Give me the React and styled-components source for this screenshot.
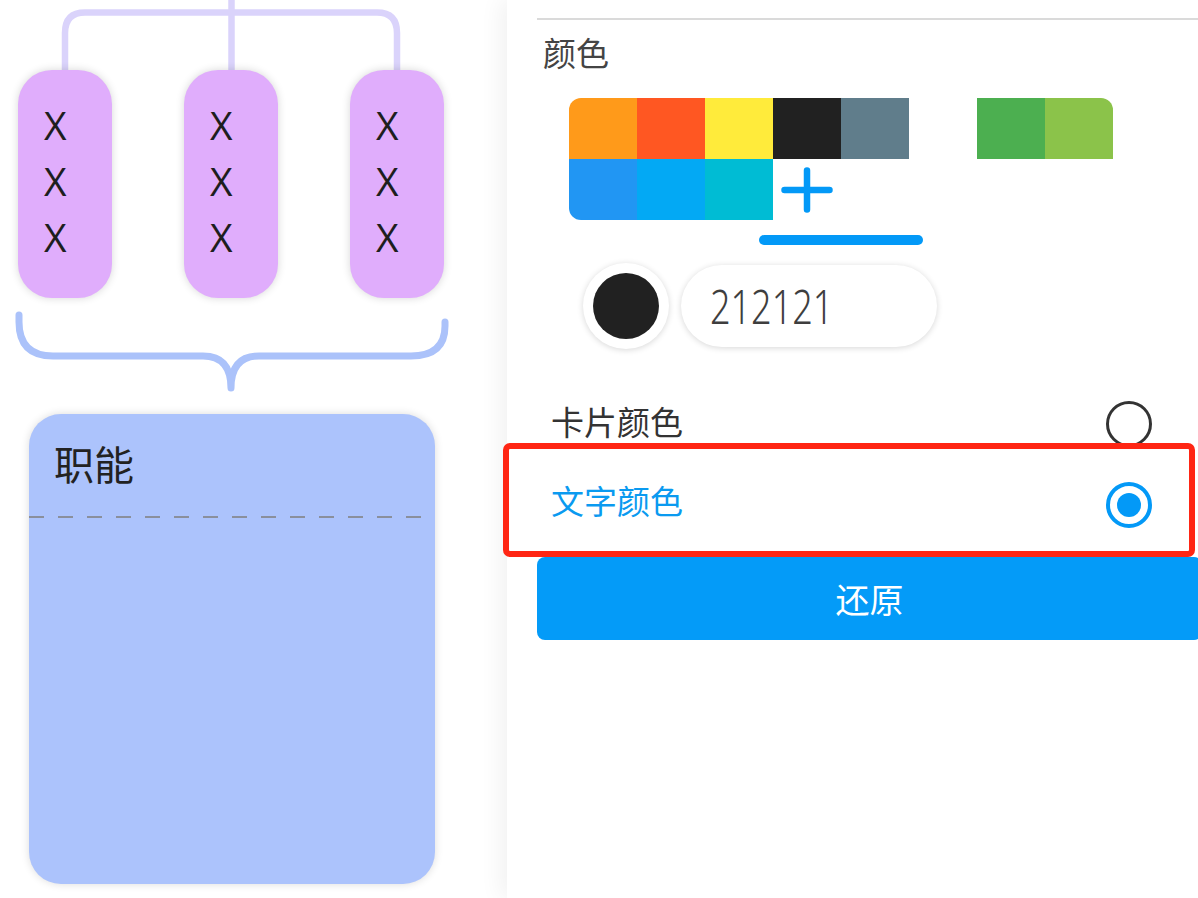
import React from 'react';
import styled, { createGlobalStyle } from 'styled-components';

const Global = createGlobalStyle`
  html, body { margin: 0; padding: 0; background: #fff; }
  body { font-family: "Noto Sans CJK SC", "Noto Sans", sans-serif; }
  * { box-sizing: border-box; }
`;

const Page = styled.div`
  display: flex;
  width: 1198px;
  height: 898px;
  overflow: hidden;
  background: #fff;
`;

const LeftPanel = styled.div`
  width: 507px;
  flex: none;
  display: flex;
  flex-direction: column;
`;

const Drawing = styled.svg`
  display: block;
  flex: none;
`;

const PillRow = styled.div`
  display: flex;
  gap: 72px;
  padding-left: 18px;
  height: 228px;
  flex: none;
`;

const Pill = styled.div`
  width: 94px;
  height: 228px;
  border-radius: 34px;
  background: #e0adfc;
  box-shadow: 0 0 8px rgba(0, 0, 0, 0.16);
  padding: 27px 0 0 26px;
  display: flex;
  flex-direction: column;
  font-family: "Open Sans", sans-serif;
  font-size: 39px;
  line-height: 56px;
  color: #1e1e1e;
`;

const Card = styled.div`
  margin-left: 29px;
  width: 406px;
  height: 470px;
  flex: none;
  border-radius: 32px;
  background: #acc3fc;
  box-shadow: 0 0 8px rgba(0, 0, 0, 0.14);
  display: flex;
  flex-direction: column;
`;

const CardTitle = styled.div`
  padding: 21px 0 0 25px;
  font-size: 40px;
  line-height: 56px;
  color: #222;
`;

const DashLine = styled.div`
  margin-top: 25px;
  width: 393px;
  height: 2px;
  background: repeating-linear-gradient(to right, #8a8f9c 0 15px, transparent 15px 29px);
`;

const RightPanel = styled.div`
  flex: 1;
  position: relative;
  z-index: 1;
  background: #fff;
  box-shadow: -6px 0 22px rgba(0, 0, 0, 0.06);
  padding-left: 30px;
  display: flex;
  flex-direction: column;
`;

const Divider = styled.div`
  margin-top: 18px;
  height: 2px;
  background: #dadada;
`;

const SectionLabel = styled.div`
  margin-top: 10px;
  padding-left: 6px;
  font-size: 33px;
  line-height: 44px;
  color: #444;
`;

const Grid = styled.div`
  margin-top: 24px;
  margin-left: 32px;
  width: 544px;
  display: flex;
  flex-wrap: wrap;
  border-radius: 12px;
  overflow: hidden;
`;

const Cell = styled.div`
  width: 68px;
  height: 61px;
  background: ${(p) => p.$color};
  display: flex;
  align-items: center;
  justify-content: center;
`;

const Indicator = styled.div`
  margin-top: 15px;
  margin-left: 222px;
  width: 164px;
  height: 10px;
  border-radius: 5px;
  background: #0399f7;
`;

const SwatchRow = styled.div`
  margin-top: 18px;
  margin-left: 46px;
  display: flex;
  align-items: center;
  gap: 12px;
`;

const SwatchRing = styled.div`
  width: 86px;
  height: 86px;
  border-radius: 50%;
  background: #fff;
  box-shadow: 0 1px 6px rgba(0, 0, 0, 0.16);
  display: flex;
  align-items: center;
  justify-content: center;
`;

const SwatchDot = styled.div`
  width: 66px;
  height: 66px;
  border-radius: 50%;
  background: ${(p) => p.$color};
`;

const HexField = styled.div`
  width: 256px;
  height: 82px;
  border-radius: 41px;
  background: #fff;
  box-shadow: 0 1px 6px rgba(0, 0, 0, 0.16);
  padding-left: 29px;
  display: flex;
  align-items: center;
`;

const HexText = styled.span`
  display: inline-block;
  font-family: "Noto Sans", sans-serif;
  font-weight: 300;
  font-size: 48px;
  line-height: 1;
  color: #3e3e3e;
  transform: scaleX(0.75);
  transform-origin: left center;
`;

const Options = styled.div`
  margin-top: 34px;
  display: flex;
  flex-direction: column;
`;

const OptionRow = styled.div`
  position: relative;
  height: 81px;
  padding: 0 46px 0 14px;
  display: flex;
  align-items: center;
  justify-content: space-between;
  font-size: 33px;
  color: ${(p) => (p.$active ? '#0a9af0' : '#333')};
`;

const OptionLabel = styled.span`
  margin-bottom: ${(p) => (p.$active ? '10px' : '6px')};
`;

const Radio = styled.div`
  width: 46px;
  height: 46px;
  border-radius: 50%;
  border: ${(p) => (p.$checked ? '4.5px solid #0399f7' : '3.5px solid #333')};
  display: flex;
  align-items: center;
  justify-content: center;
  &::after {
    content: '';
    display: ${(p) => (p.$checked ? 'block' : 'none')};
    width: 24px;
    height: 24px;
    border-radius: 50%;
    background: #0399f7;
  }
`;

const Highlight = styled.div`
  position: absolute;
  top: -21px;
  bottom: -12px;
  left: -34px;
  right: 3px;
  border: 6px solid #ff2614;
  border-radius: 7px;
  pointer-events: none;
`;

const ResetButton = styled.button`
  margin-top: 12px;
  width: calc(100% + 4px);
  height: 83px;
  border: none;
  border-radius: 8px;
  background: #049bf8;
  color: #fff;
  font-family: "Noto Sans CJK SC", sans-serif;
  font-size: 34px;
  display: flex;
  align-items: center;
  justify-content: center;
  padding: 0;
`;

const swatches = [
  '#ff9a1a', '#ff5722', '#ffeb3b', '#212121', '#607d8b', '#ffffff', '#4caf50', '#8bc34a',
  '#2196f3', '#03a9f4', '#00bcd4',
];

const PlusIcon = () => (
  <svg width="52" height="46" viewBox="0 0 52 46">
    <path d="M3.5 23 H48.5 M26 3.5 V42.5" stroke="#0399f7" strokeWidth="6.5" strokeLinecap="round" fill="none" />
  </svg>
);

export default function App() {
  return (
    <>
      <Global />
      <Page>
        <LeftPanel>
          <Drawing width="507" height="70" viewBox="0 0 507 70">
            <path d="M65 70 V33 Q65 12.5 85 12.5 H377 Q397 12.5 397 33 V70" stroke="#dad3fb" strokeWidth="6.5" fill="none" />
            <path d="M231.5 0 V70" stroke="#dad3fb" strokeWidth="6.5" fill="none" />
          </Drawing>
          <PillRow>
            {[0, 1, 2].map((i) => (
              <Pill key={i}>
                <span>X</span>
                <span>X</span>
                <span>X</span>
              </Pill>
            ))}
          </PillRow>
          <Drawing width="507" height="116" viewBox="0 0 507 116">
            <path
              d="M19 17 V24 Q19 58 53 58 H203 Q231 58 231 90 Q231 58 259 58 H411 Q445 58 445 28 V24"
              stroke="#abc2fa"
              strokeWidth="7"
              strokeLinecap="round"
              strokeLinejoin="round"
              fill="none"
            />
          </Drawing>
          <Card>
            <CardTitle>职能</CardTitle>
            <DashLine />
          </Card>
        </LeftPanel>
        <RightPanel>
          <Divider />
          <SectionLabel>颜色</SectionLabel>
          <Grid>
            {swatches.map((c, i) => (
              <Cell key={i} $color={c} />
            ))}
            <Cell $color="#fff">
              <PlusIcon />
            </Cell>
          </Grid>
          <Indicator />
          <SwatchRow>
            <SwatchRing>
              <SwatchDot $color="#212121" />
            </SwatchRing>
            <HexField>
              <HexText>212121</HexText>
            </HexField>
          </SwatchRow>
          <Options>
            <OptionRow>
              <OptionLabel>卡片颜色</OptionLabel>
              <Radio />
            </OptionRow>
            <OptionRow $active>
              <OptionLabel $active>文字颜色</OptionLabel>
              <Radio $checked />
              <Highlight />
            </OptionRow>
          </Options>
          <ResetButton>还原</ResetButton>
        </RightPanel>
      </Page>
    </>
  );
}
